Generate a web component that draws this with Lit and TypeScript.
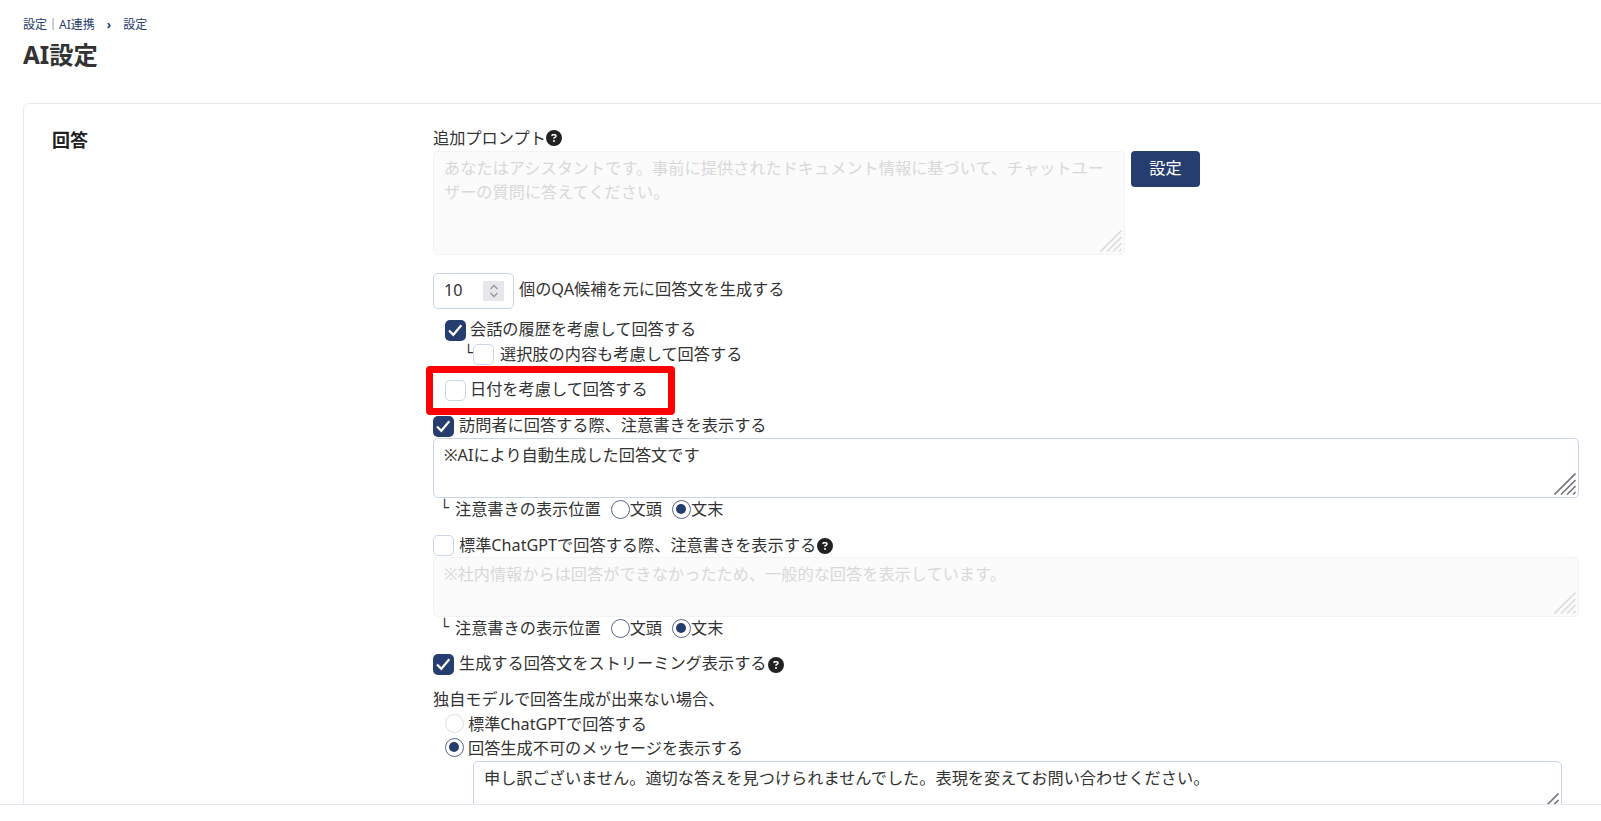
import { LitElement, html, css } from "lit";
import { customElement } from "lit/decorators.js";

const help = html`<svg class="help" viewBox="0 0 512 512"><path fill="#222" d="M256 512A256 256 0 1 0 256 0a256 256 0 1 0 0 512zM169.8 165.3c7.9-22.3 29.1-37.3 52.8-37.3h58.3c34.9 0 63.1 28.3 63.1 63.1c0 22.6-12.1 43.5-31.7 54.8L280 264.4c-.2 13-10.9 23.6-24 23.6c-13.3 0-24-10.7-24-24V250.5c0-8.6 4.6-16.5 12.1-20.8l44.3-25.4c4.7-2.7 7.6-7.7 7.6-13.1c0-8.4-6.8-15.1-15.1-15.1H222.6c-3.4 0-6.4 2.1-7.5 5.3l-.4 1.2c-4.4 12.5-18.2 19-30.6 14.6s-19-18.2-14.6-30.6l.4-1.2zM224 352a32 32 0 1 1 64 0 32 32 0 1 1 -64 0z"/></svg>`;

const box = (on: boolean) => on
  ? html`<span class="box on"><svg viewBox="0 0 21 21" width="21" height="21"><path d="M4 10.5l4.3 4.3 8-9.5" fill="none" stroke="#fff" stroke-width="2.2"/></svg></span>`
  : html`<span class="box"></span>`;

const grip = (light: boolean) => html`<svg class="grip ${light ? "light" : ""}" viewBox="0 0 22 22" width="22" height="22">
  <path d="M0.5 21.5L21.5 0.5M7 21.5L21.5 7M13 21.5L21.5 13M19 21.5L21.5 19" fill="none" stroke-width="1.6"/></svg>`;

const position = html`<div class="pos">
  <span class="elbow">└</span><span class="poslabel">注意書きの表示位置</span>
  <span class="radio"></span><span class="rl">文頭</span>
  <span class="radio on sel"></span><span class="rl">文末</span>
</div>`;

@customElement("app-root")
export class AppRoot extends LitElement {
  static styles = css`
    :host { display: block; height: 821px; overflow: hidden; background: #fff; color: #333;
      font-family: "Noto Sans", "Noto Sans CJK JP", sans-serif; font-size: 16.2px; line-height: 24px; }
    * { box-sizing: border-box; }
    .main { height: 805px; overflow: hidden; border-bottom: 1px solid #e3e8f2; padding-top: 17px; }
    .crumb { margin-left: 23px; height: 16px; font-size: 12px; line-height: 16px; color: #253b6e; display: flex; }
    .crumb .sep { margin: 0 12px; font-weight: 700; }
    h1 { margin: 9px 0 0 23px; height: 26px; font-size: 24.3px; line-height: 26px; font-weight: 700; color: #333; }
    .card { margin: 35px 0 0 23px; width: 1620px; height: 800px; border: 1px solid #e8e8f0; border-radius: 6px;
      padding: 22px 0 0 28px; display: flex; background: #fff; }
    h2 { margin: 0; padding-top: 2px; width: 381px; flex: none; font-size: 18px; line-height: 24px; font-weight: 700; color: #222; }
    .col { width: 1146px; flex: none; display: flex; flex-direction: column; align-items: flex-start; }
    .label { display: flex; align-items: center; height: 24px; white-space: nowrap; }
    .help { width: 16px; height: 16px; flex: none; }
    .check .help { margin-left: -4px; }
    .ta { position: relative; width: 100%; border: 1px solid #c8d5ea; border-radius: 5px; background: #fff;
      padding: 3.5px 10px; line-height: 24.5px; }
    .ta.off { background: #fbfbfb; border-color: #f3f3f3; color: #d8d8d8; }
    .ta .grip { position: absolute; right: 2px; bottom: 2px; stroke: #777; }
    .grip.light { stroke: #ddd; }
    .prompt { display: flex; gap: 6px; margin-top: 1px; align-items: flex-start; width: 100%; }
    .prompt .ta { width: 692px; height: 104px; flex: none; padding-right: 8px; }
    .btn { width: 69px; height: 36px; background: #263d70; color: #fff; border-radius: 4px; display: flex;
      align-items: center; justify-content: center; padding-bottom: 2px; }
    .num { display: flex; align-items: center; gap: 5px; margin-top: 18px; height: 36px; white-space: nowrap; }
    .num > span { padding-bottom: 4px; }
    .numbox { width: 81px; height: 36px; border: 1px solid #c8d5ea; border-radius: 5px; display: flex; align-items: center;
      justify-content: space-between; padding: 0 9px 0 10px; }
    .numbox > span:first-child { padding-bottom: 2px; }
    .spin { width: 21px; height: 20px; background: #e6e6eb; display: flex; align-items: center; justify-content: center; }
    .check { display: flex; align-items: center; height: 21px; gap: 5px; white-space: nowrap; position: relative; }
    .check > span:not(.box):not(.elbow) { padding-bottom: 4px; }
    .box { width: 21px; height: 21px; flex: none; border: 1px solid #c8d5ea; border-radius: 5px; background: #fff; display: block; }
    .box.on { background: #263d70; border: 0; }
    .box svg { display: block; }
    .c1 { margin: 11px 0 0 12px; gap: 4px; }
    .c2 { margin: 3px 0 0 28px; gap: 6px; }
    .check.c2 > span:not(.box):not(.elbow) { padding-bottom: 2px; }
    .elbow { font-family: "DejaVu Sans Mono", monospace; font-size: 15px; color: #333; line-height: 16px; }
    .c2 .elbow { width: 12px; margin-right: -6px; text-align: right; padding-bottom: 3px; }
    .c3 { margin: 15px 0 0 12px; gap: 4px; }
    .c4 { margin-top: 15px; }
    .c5 { margin-top: 15px; }
    .check.c5 > span:not(.box):not(.elbow) { padding-bottom: 2px; }
    .c6 { margin-top: 15px; }
    .hl { position: absolute; left: -19px; top: -14px; width: 249px; height: 49px; border: 7px solid #f00; border-radius: 4px; }
    .note { margin-top: 1px; height: 60px; }
    .note2 { margin-top: 1px; height: 60px; }
    .pos { display: flex; align-items: center; height: 22px; margin-left: 7px; white-space: nowrap; }
    .pos .elbow { width: 15px; padding-bottom: 3px; }
    .poslabel { margin-right: 10px; }
    .radio { width: 19px; height: 19px; flex: none; border-radius: 50%; border: 1.5px solid #55658c; background: #fff; position: relative; display: block; }
    .radio.on::after { content: ""; position: absolute; left: 3px; top: 3px; width: 10px; height: 10px; border-radius: 50%; background: #263d70; }
    .radio.dis { border: 1px solid #d9dfe9; }
    .radio.sel { margin-left: 10px; }
    .after { margin-top: 0; }
    .own { margin-top: 12px; height: 24px; white-space: nowrap; }
    .rr { display: flex; align-items: center; height: 24px; margin-left: 12px; gap: 4px; white-space: nowrap; }
    .rr > span:last-child { padding-top: 2px; }
    .msg { margin: 2px 0 0 40px; width: 1089px; height: 57px; flex: none; }
  `;

  render() {
    return html`<div class="main">
      <div class="crumb"><span>設定｜AI連携</span><span class="sep">›</span><span>設定</span></div>
      <h1>AI設定</h1>
      <div class="card">
        <h2>回答</h2>
        <div class="col">
          <div class="label">追加プロンプト${help}</div>
          <div class="prompt">
            <div class="ta off">あなたはアシスタントです。事前に提供されたドキュメント情報に基づいて、チャットユーザーの質問に答えてください。${grip(true)}</div>
            <div class="btn">設定</div>
          </div>
          <div class="num">
            <div class="numbox"><span>10</span>
              <span class="spin"><svg viewBox="0 0 10 16" width="10" height="16"><path d="M1.5 6L5 2.5 8.5 6M1.5 10L5 13.5 8.5 10" fill="none" stroke="#999" stroke-width="1.3"/></svg></span>
            </div>
            <span>個のQA候補を元に回答文を生成する</span>
          </div>
          <div class="check c1">${box(true)}<span>会話の履歴を考慮して回答する</span></div>
          <div class="check c2"><span class="elbow">└</span>${box(false)}<span>選択肢の内容も考慮して回答する</span></div>
          <div class="check c3">${box(false)}<span>日付を考慮して回答する</span><div class="hl"></div></div>
          <div class="check c4">${box(true)}<span>訪問者に回答する際、注意書きを表示する</span></div>
          <div class="ta note">※AIにより自動生成した回答文です${grip(false)}</div>
          ${position}
          <div class="check c5">${box(false)}<span>標準ChatGPTで回答する際、注意書きを表示する</span>${help}</div>
          <div class="ta off note2">※社内情報からは回答ができなかったため、一般的な回答を表示しています。${grip(true)}</div>
          <div class="after">${position}</div>
          <div class="check c6">${box(true)}<span>生成する回答文をストリーミング表示する</span>${help}</div>
          <div class="own">独自モデルで回答生成が出来ない場合、</div>
          <div class="rr"><span class="radio dis"></span><span>標準ChatGPTで回答する</span></div>
          <div class="rr"><span class="radio on"></span><span>回答生成不可のメッセージを表示する</span></div>
          <div class="ta msg">申し訳ございません。適切な答えを見つけられませんでした。表現を変えてお問い合わせください。${grip(false)}</div>
        </div>
      </div>
    </div>`;
  }
}
